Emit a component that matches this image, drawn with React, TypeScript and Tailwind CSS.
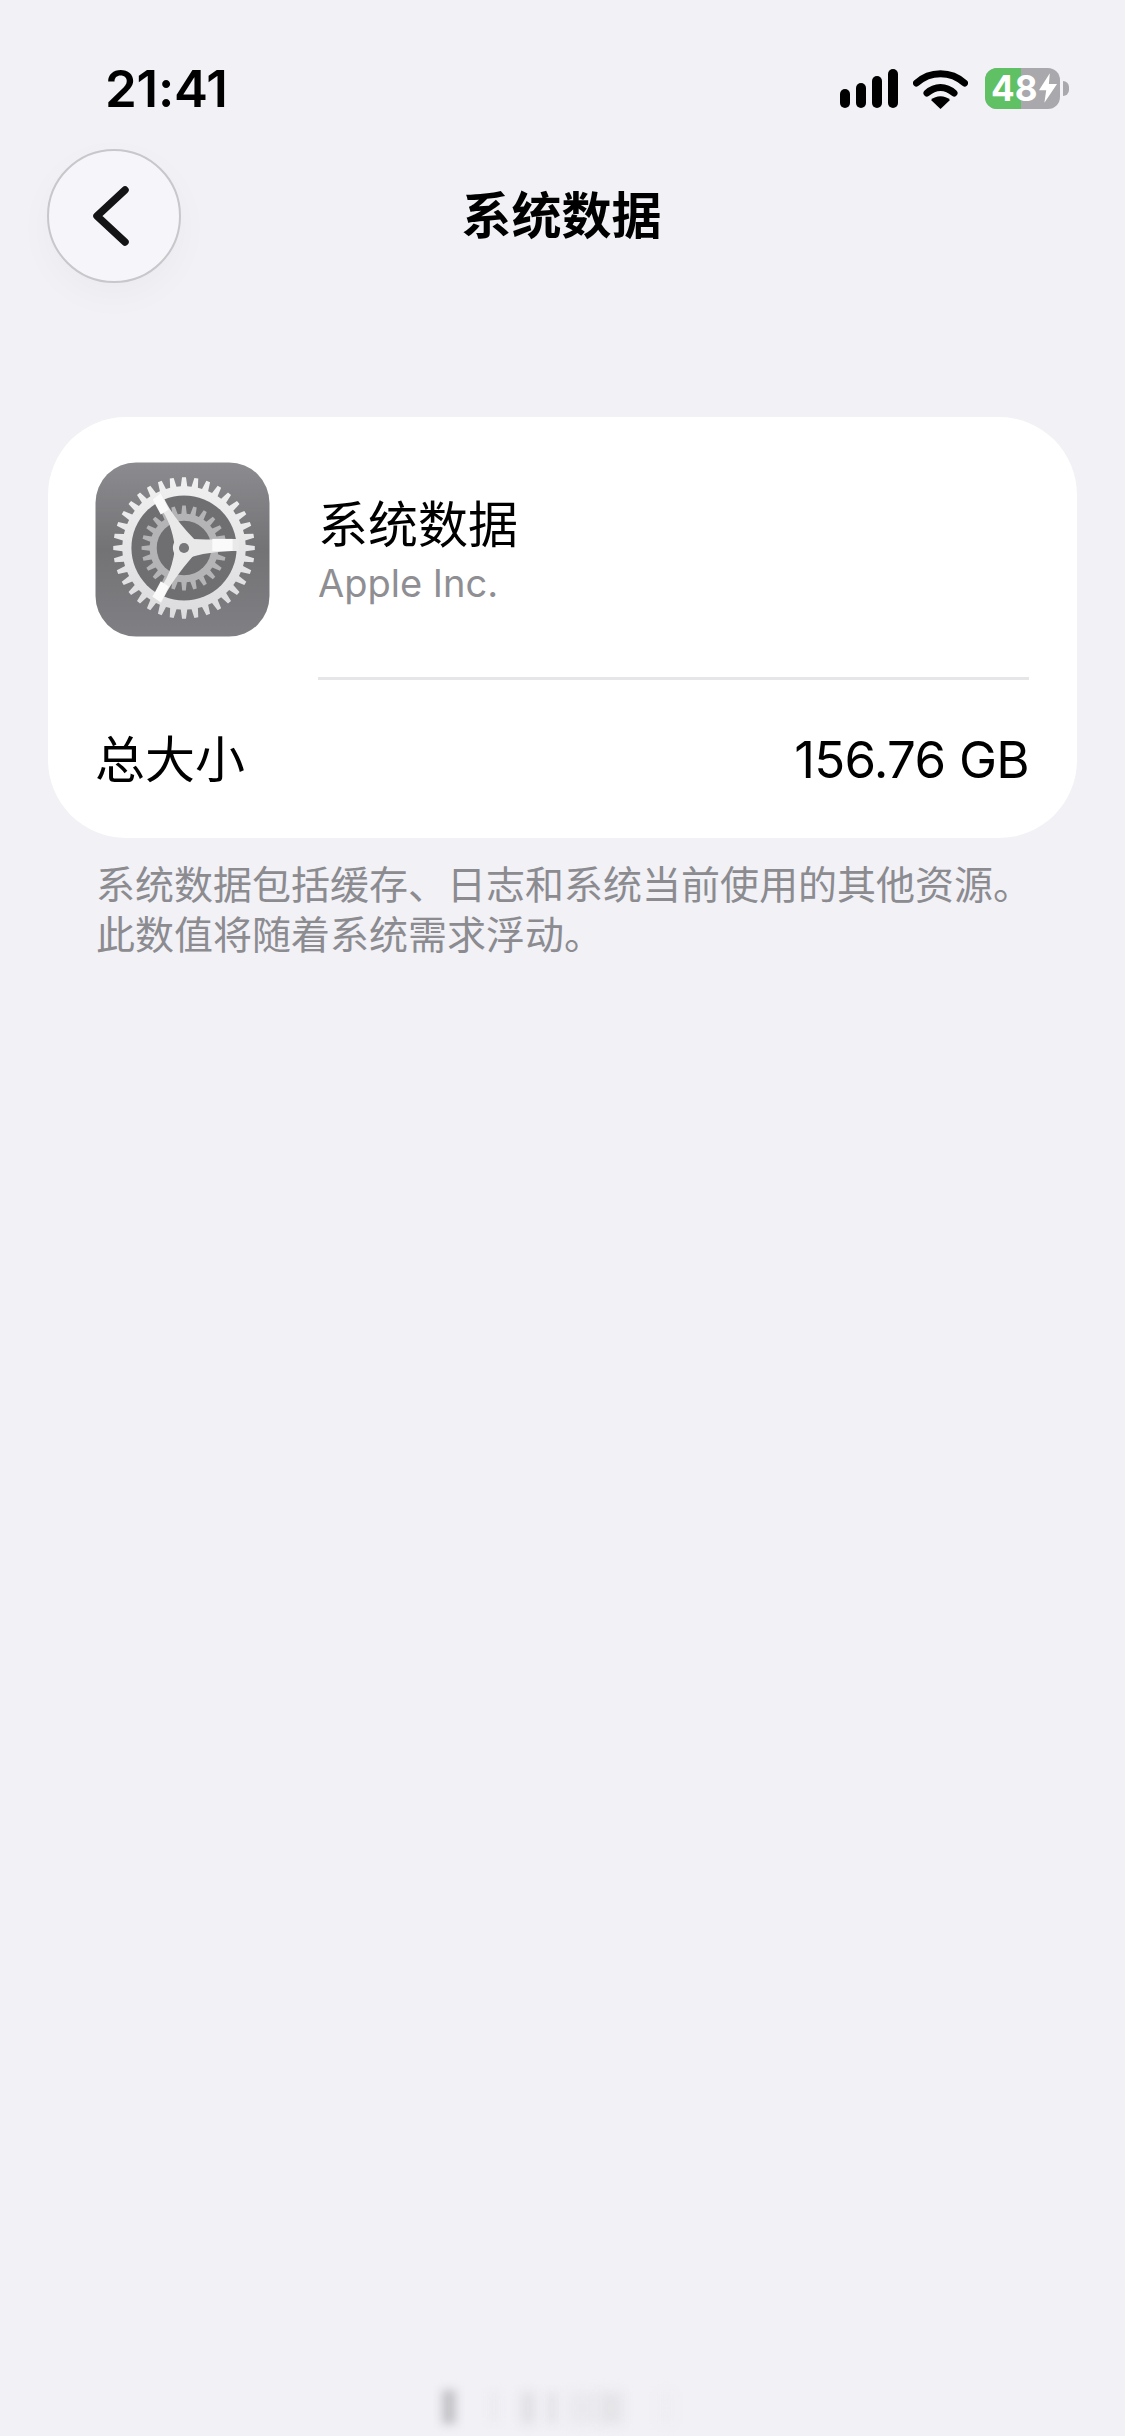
import React from "react";

const CJK = "font-['Inter','Noto_Sans_CJK_SC',sans-serif]";

function gearPath(cx: number, cy: number, rOut: number, rIn: number, teeth: number) {
  const pts: string[] = [];
  const step = (Math.PI * 2) / teeth;
  for (let i = 0; i < teeth; i++) {
    const a = i * step - Math.PI / 2;
    const seq: [number, number][] = [
      [rIn, a - step * 0.3],
      [rOut, a - step * 0.16],
      [rOut, a + step * 0.16],
      [rIn, a + step * 0.3],
    ];
    for (const [r, t] of seq) pts.push(`${(cx + r * Math.cos(t)).toFixed(2)} ${(cy + r * Math.sin(t)).toFixed(2)}`);
  }
  return "M" + pts.join("L") + "Z";
}

function SettingsIcon() {
  return (
    <svg width="175" height="175" viewBox="0 0 173 173" className="shrink-0">
      <defs>
        <linearGradient id="bg" x1="0" y1="0" x2="0" y2="1">
          <stop offset="0" stopColor="#8c8c90" />
          <stop offset="0.5" stopColor="#737376" />
          <stop offset="1" stopColor="#808084" />
        </linearGradient>
        <linearGradient id="metal" x1="0" y1="0" x2="0" y2="1">
          <stop offset="0" stopColor="#f0f0f1" />
          <stop offset="1" stopColor="#dcdcde" />
        </linearGradient>
        <mask id="ringHole">
          <rect width="173" height="173" fill="white" />
          <circle cx="88" cy="85" r="52" fill="black" />
        </mask>
        <mask id="innerHole">
          <rect width="173" height="173" fill="white" />
          <circle cx="88" cy="85" r="27" fill="black" />
        </mask>
      </defs>
      <rect x="0.5" y="0.5" width="172" height="172" rx="40" fill="url(#bg)" />
      <circle cx="88" cy="85" r="52" fill="#6f6f72" />
      <path d={gearPath(88, 85, 42, 34, 24)} fill="#b4b4b6" mask="url(#innerHole)" />
      <path d={gearPath(88, 85, 70, 61, 36)} fill="url(#metal)" mask="url(#ringHole)" />
      <g fill="#e9e9ea">
        <path d="M79 84 C76 62 68 46 56 37 L66 31 C72 46 84 62 98 76 Z" />
        <path d="M84 75 C104 78 124 76 142 76 L142 88 C124 88 104 90 86 97 Z" />
        <path d="M97 93 C84 108 72 124 66 139 L56 133 C68 124 76 108 79 86 Z" />
      </g>
      <path d="M57 37 L65 31 L73 47 L65 52 Z" fill="#fafafa" />
      <path d="M116 76 H136 V88 H116 Z" fill="#fafafa" />
      <path d="M65 118 L73 123 L65 139 L57 133 Z" fill="#fafafa" />
      <circle cx="88" cy="85" r="11" fill="#e9e9ea" />
      <circle cx="88" cy="85" r="5" fill="#77777a" />
    </svg>
  );
}

function StatusIcons() {
  return (
    <div className="flex items-center">
      <svg width="58" height="39" viewBox="0 0 58 39" className="mr-[15px]">
        <rect x="0" y="20" width="10" height="19" rx="5" fill="#000" />
        <rect x="16" y="14" width="10" height="25" rx="5" fill="#000" />
        <rect x="32" y="7" width="10" height="32" rx="5" fill="#000" />
        <rect x="48" y="0" width="10" height="39" rx="5" fill="#000" />
      </svg>
      <svg width="55" height="40" viewBox="0 0 55 40" className="mr-[17px]" fill="none">
        <path d="M3.5 14 C17 1.5 38 1.5 51.5 14" stroke="#000" strokeWidth="7" strokeLinecap="round" />
        <path d="M14 24 C22 16.5 33 16.5 41 24" stroke="#000" strokeWidth="7" strokeLinecap="round" />
        <path d="M27.5 40 L18 31 C23 26 32 26 37 31 Z" fill="#000" />
      </svg>
      <div className="relative flex h-[41px] w-[75px] rounded-[12px] bg-[#a9a9ad]">
        <div className="h-full w-[36px] rounded-l-[12px] bg-[#5fc164]" />
        <span className="absolute left-[6px] top-0 font-['Inter',sans-serif] text-[35px] font-bold leading-[41px] text-white">
          48
        </span>
        <svg width="18" height="32" viewBox="0 0 20 33" className="absolute left-[54px] top-[4px]">
          <path d="M12 0 L0 19 H8 L6 33 L20 12 H11 Z" fill="#fff" />
        </svg>
      </div>
      <div className="ml-[3px] h-[15px] w-[6px] rounded-r-[6px] bg-[#a9a9ad]" />
    </div>
  );
}

export default function App() {
  return (
    <div className={`relative flex min-h-[2436px] w-[1125px] flex-col overflow-hidden bg-[#f1f1f6] ${CJK}`}>
      <div className="flex h-[149px] items-start justify-between pl-[105px] pr-[56px] pt-[60px]">
        <span className="text-[51px] font-semibold leading-[58px] tracking-[-0.2px] text-black">21:41</span>
        <div className="pt-[8px]">
          <StatusIcons />
        </div>
      </div>

      <div className="relative flex h-[134px] items-center justify-center">
        <div className="absolute left-[47px] top-0 flex h-[134px] w-[134px] items-center justify-center rounded-full border-2 border-[#c8c8cb] bg-[#f5f5fa] shadow-[0_12px_36px_rgba(0,0,0,0.03)]">
          <svg width="36" height="60" viewBox="0 0 36 60" fill="none" className="mr-[7px]">
            <path d="M32 4 L4 30 L32 56" stroke="#141416" strokeWidth="7.5" strokeLinecap="round" strokeLinejoin="round" />
          </svg>
        </div>
        <span className="pr-[2px] text-[50px] font-semibold leading-[60px] text-black">系统数据</span>
      </div>

      <div className="mx-[48px] mt-[134px] flex h-[421px] flex-col rounded-[78px] bg-white pl-[47px] pr-[48px]">
        <div className="flex h-[263px] items-start">
          <div className="pt-[45px]">
            <SettingsIcon />
          </div>
          <div className="ml-[48px] flex h-full flex-1 flex-col border-b-[3px] border-[#e6e6e8] pt-[78px]">
            <span className="text-[50px] leading-[60px] text-black">系统数据</span>
            <span className="mt-[4px] text-[38px] leading-[48px] text-[#8e8e93]">Apple Inc.</span>
          </div>
        </div>
        <div className="flex flex-1 items-center justify-between pt-[2px]">
          <span className="text-[50px] leading-[60px] text-black">总大小</span>
          <span className="text-[51px] leading-[60px] tracking-[-0.7px] text-black">156.76 GB</span>
        </div>
      </div>

      <div className="ml-[96px] mr-[20px] mt-[22px] text-[39px] leading-[50px] text-[#8b8b90]">
        <div>系统数据包括缓存、日志和系统当前使用的其他资源。</div>
        <div>此数值将随着系统需求浮动。</div>
      </div>

      <div className="absolute left-[442px] top-[2390px] h-[34px] w-[14px] bg-[#c4c4c8] blur-[5px]" />
      <div className="absolute left-[490px] top-[2392px] h-[30px] w-[8px] bg-[#ebebef] blur-[5px]" />
      <div className="absolute left-[522px] top-[2392px] h-[32px] w-[12px] bg-[#dedee2] blur-[6px]" />
      <div className="absolute left-[548px] top-[2392px] h-[32px] w-[8px] bg-[#e2e2e6] blur-[5px]" />
      <div className="absolute left-[568px] top-[2392px] h-[32px] w-[30px] bg-[#eaeaee] blur-[6px]" />
      <div className="absolute left-[600px] top-[2392px] h-[32px] w-[22px] bg-[#e4e4e8] blur-[6px]" />
      <div className="absolute left-[660px] top-[2392px] h-[32px] w-[12px] bg-[#eeeef2] blur-[6px]" />
    </div>
  );
}
